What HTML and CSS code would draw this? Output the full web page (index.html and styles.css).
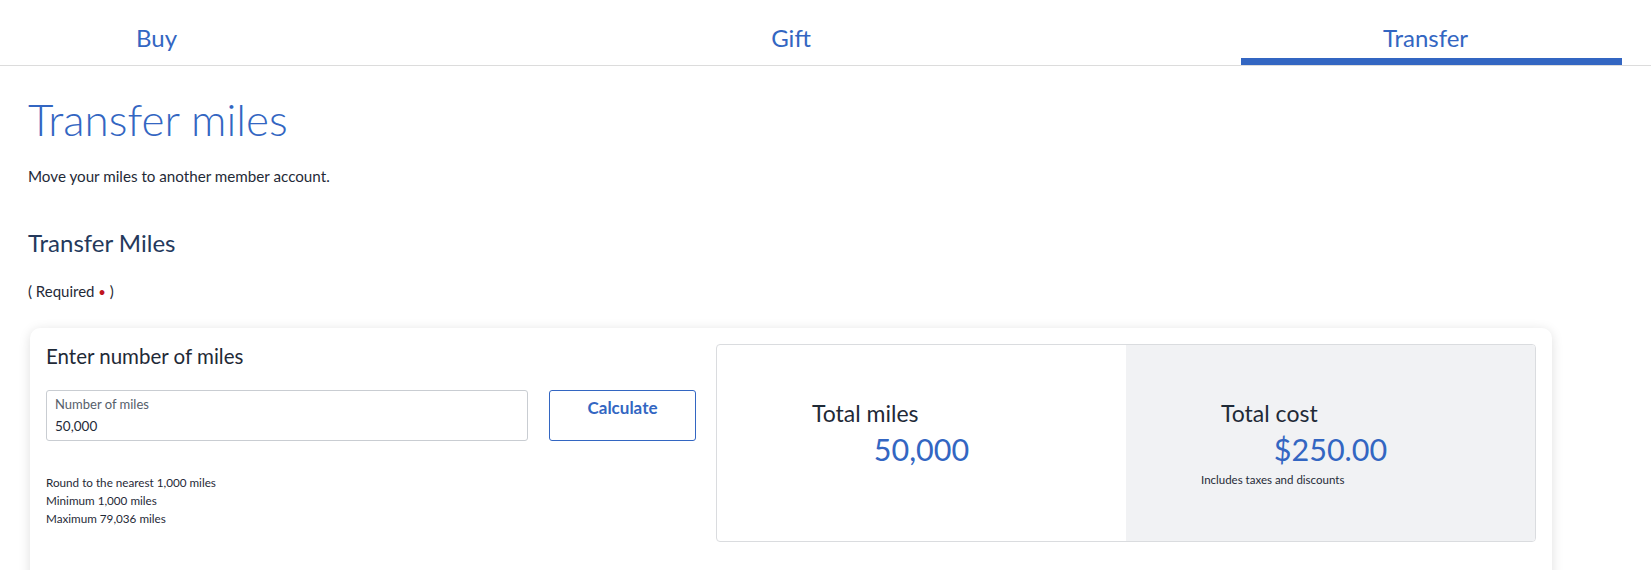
FILE: index.html
```html
<!DOCTYPE html>
<html lang="en">
<head>
<meta charset="utf-8">
<title>Transfer miles</title>
<link rel="stylesheet" href="styles.css">
</head>
<body>
<nav class="tabs">
  <a class="tab">Buy</a>
  <a class="tab">Gift</a>
  <a class="tab tab-active">Transfer</a>
</nav>
<main class="page">
  <h1 class="title">Transfer miles</h1>
  <p class="intro">Move your miles to another member account.</p>
  <h2 class="section-title">Transfer Miles</h2>
  <p class="required">( Required <span class="dot">•</span> )</p>
  <section class="card">
    <div class="entry">
      <h3 class="entry-title">Enter number of miles</h3>
      <div class="entry-row">
        <label class="field">
          <span class="field-label">Number of miles</span>
          <span class="field-value">50,000</span>
        </label>
        <button class="btn">Calculate</button>
      </div>
      <ul class="notes">
        <li>Round to the nearest 1,000 miles</li>
        <li>Minimum 1,000 miles</li>
        <li>Maximum 79,036 miles</li>
      </ul>
    </div>
    <div class="summary">
      <div class="summary-half">
        <div class="sum-label">Total miles</div>
        <div class="sum-value">50,000</div>
      </div>
      <div class="summary-half summary-cost">
        <div class="sum-label">Total cost</div>
        <div class="sum-value">$250.00</div>
        <div class="sum-note">Includes taxes and discounts</div>
      </div>
    </div>
  </section>
</main>
</body>
</html>
```

FILE: styles.css
```css
* { box-sizing: border-box; }
html, body { margin: 0; padding: 0; background: #fff; }
body {
  font-family: Lato, "Open Sans", sans-serif;
  color: #1f2a37;
  overflow: hidden;
}

.tabs {
  display: grid;
  grid-template-columns: repeat(3, 381px);
  column-gap: 253.5px;
  margin-left: -28px;
  border-bottom: 1px solid #dcdcdc;
  height: 66px;
  padding-left: 0;
}
.tab {
  display: block;
  text-align: center;
  font-size: 24px;
  line-height: 29px;
  padding: 23px 12px 6px 0;
  color: #3366c2;
  border-bottom: 7px solid transparent;
  height: 65px;
}
.tab-active { border-bottom-color: #3366c2; }

.page { padding: 0 0 0 28px; }

.title {
  margin: 27px 0 0;
  font-size: 44px;
  line-height: 53px;
  font-weight: 300;
  color: #3366c2;
}
.intro {
  margin: 20px 0 0;
  font-size: 15.2px;
  line-height: 20px;
  color: #1f2a37;
}
.section-title {
  margin: 42px 0 0;
  font-size: 24px;
  line-height: 29px;
  font-weight: 400;
  color: #24395c;
}
.required {
  margin: 25px 0 0;
  font-size: 15px;
  line-height: 18px;
  color: #1f2a37;
}
.dot { color: #c0161e; font-size: 13px; }

.card {
  margin: 27px 0 0 2px;
  width: 1522px;
  height: 270px;
  background: #fff;
  border-radius: 10px;
  box-shadow: 0 2px 12px rgba(0, 0, 0, 0.13);
  padding: 16px;
  display: grid;
  grid-template-columns: 650px 820px;
  column-gap: 20px;
  align-items: start;
}

.entry-title {
  margin: 0;
  font-size: 20.5px;
  line-height: 25px;
  font-weight: 400;
  color: #1f2a37;
}
.entry-row {
  margin-top: 21px;
  display: flex;
  gap: 21px;
}
.field {
  width: 482px;
  height: 51px;
  border: 1px solid #c9cdd2;
  border-radius: 3px;
  padding: 6px 8px 0;
  display: flex;
  flex-direction: column;
}
.field-label {
  font-size: 13px;
  line-height: 15px;
  color: #56606b;
}
.field-value {
  margin-top: 6px;
  font-size: 13.5px;
  line-height: 17px;
  color: #1f2a37;
}
.btn {
  width: 147px;
  height: 51px;
  border: 1px solid #3366c2;
  border-radius: 3px;
  background: #fff;
  color: #3366c2;
  font-family: inherit;
  font-size: 17px;
  font-weight: 700;
  line-height: 20px;
  padding: 7px 0 0;
  display: flex;
  justify-content: center;
  align-items: flex-start;
}

.notes {
  list-style: none;
  margin: 32px 0 0;
  padding: 0;
  font-size: 11.7px;
  line-height: 18px;
  color: #1f2a37;
}

.summary {
  height: 198px;
  margin-top: 0;
  border: 1px solid #dadcdf;
  border-radius: 4px;
  display: grid;
  grid-template-columns: 1fr 1fr;
  overflow: hidden;
}
.summary-half {
  display: flex;
  flex-direction: column;
  padding-top: 55px;
}
.summary-cost { background: #f1f2f4; }
.sum-label {
  padding-left: 95px;
  font-size: 23px;
  line-height: 27px;
  color: #1f2a37;
}
.sum-value {
  margin-top: 4px;
  text-align: center;
  font-size: 30.5px;
  line-height: 37px;
  color: #3366c2;
}
.sum-note {
  margin-top: 4px;
  padding-left: 75px;
  font-size: 11.5px;
  line-height: 16px;
  color: #1f2a37;
}
```
